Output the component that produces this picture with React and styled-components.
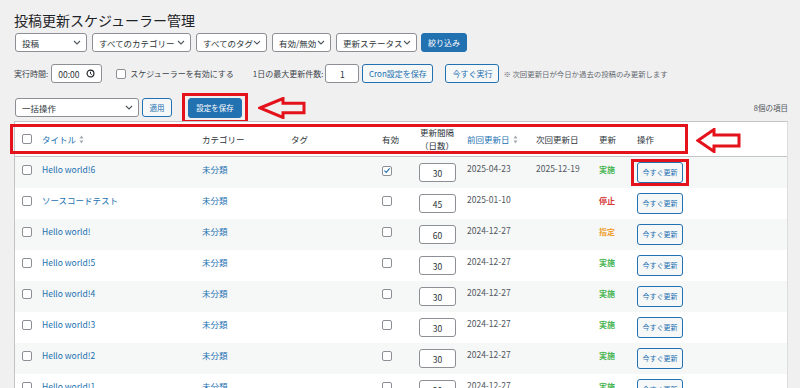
import React from "react";
import styled, { createGlobalStyle } from "styled-components";

const GlobalStyle = createGlobalStyle`
  body {
    margin: 0;
    background: #f0f0f1;
    font-family: "Noto Sans CJK JP", "Noto Sans", sans-serif;
    color: #3c434a;
  }
`;

const Page = styled.div`
  padding: 9px 12px 0 14px;
`;

const Title = styled.h1`
  margin: 0;
  font-size: 14px;
  font-weight: 400;
  line-height: 22px;
  color: #1d2327;
`;

const Row = styled.div`
  display: flex;
  align-items: center;
  gap: ${p => p.gap ?? 5}px;
  margin-top: ${p => p.mt || 0}px;
  height: 19px;
`;

const SelectBox = styled.div`
  display: flex;
  align-items: center;
  justify-content: space-between;
  box-sizing: border-box;
  width: ${p => p.w}px;
  height: 19px;
  padding: 0 5px 0 6px;
  background: #fff;
  border: 1px solid #8c8f94;
  border-radius: 3px;
  font-size: 8.5px;
  color: #2c3338;
  white-space: nowrap;
`;

const Button = styled.div`
  position: relative;
  display: flex;
  align-items: center;
  justify-content: center;
  box-sizing: border-box;
  width: ${p => p.w}px;
  height: ${p => p.h || 19}px;
  border-radius: 3px;
  font-size: ${p => p.fs || 8}px;
  white-space: nowrap;
  border: 1px solid #2271b1;
  background: ${p => (p.primary ? "#2271b1" : "#f6f7f7")};
  color: ${p => (p.primary ? "#fff" : "#2271b1")};
  ${p =>
    p.mark &&
    `&::after {
      content: "";
      position: absolute;
      inset: ${p.mark};
      border: 3px solid #e3121b;
    }`}
`;

const Label = styled.span`
  font-size: ${p => p.fs || 8}px;
  color: ${p => p.c || "#3c434a"};
  white-space: nowrap;
  margin-left: ${p => p.ml || 0}px;
`;

const TextInput = styled.div`
  display: flex;
  align-items: center;
  justify-content: ${p => (p.center ? "center" : "space-between")};
  box-sizing: border-box;
  width: ${p => p.w}px;
  height: 19px;
  padding: 0 6px;
  background: #fff;
  border: 1px solid #8c8f94;
  border-radius: 3px;
  font-size: 8.5px;
  color: #2c3338;
`;

const Check = styled.span`
  display: inline-flex;
  align-items: center;
  justify-content: center;
  box-sizing: border-box;
  width: 10px;
  height: 10px;
  border: 1px solid #8c8f94;
  border-radius: 2px;
  background: #fff;
  flex: none;
`;

const Spacer = styled.div`
  flex: 1;
`;

const TableWrap = styled.div`
  position: relative;
  margin-top: 4px;
  background: #fff;
  border: 1px solid #c3c4c7;
  border-right-color: #dcdcde;
`;

const cols = "27px 160px 89px 91px 37px 48px 69px 63px 38px 1fr";

const HeadRow = styled.div`
  display: grid;
  grid-template-columns: ${cols};
  align-items: center;
  height: 34px;
  border-bottom: 1px solid #c3c4c7;
  font-size: 8.5px;
  color: #2c3338;
`;

const HeadCell = styled.div`
  display: flex;
  align-items: center;
  gap: 3px;
  padding-left: ${p => p.pl || 0}px;
  color: ${p => (p.link ? "#2271b1" : "#2c3338")};
  ${p => p.stack && `flex-direction: column; gap: 0; line-height: 13px; align-items: center; padding-right: 12px;`}
`;

const BodyRow = styled.div`
  display: grid;
  grid-template-columns: ${cols};
  align-items: start;
  height: 31px;
  background: ${p => (p.odd ? "#f6f7f7" : "#fff")};
  font-size: 8.5px;
`;

const Cell = styled.div`
  padding-top: ${p => p.pt ?? 6}px;
  padding-left: ${p => p.pl || 0}px;
  line-height: 13px;
  color: ${p => p.c || "#50575e"};
  white-space: nowrap;
  font-weight: ${p => (p.bold ? 700 : 400)};
  font-size: ${p => p.fs || 8.5}px;
`;

const NumBox = styled.div`
  display: flex;
  align-items: center;
  justify-content: center;
  box-sizing: border-box;
  width: 37px;
  height: 19px;
  margin-top: 6px;
  background: #fff;
  border: 1px solid #8c8f94;
  border-radius: 3px;
  font-size: 8.5px;
  color: #2c3338;
`;

const HighlightBox = styled.div`
  position: absolute;
  left: -5px;
  top: 2px;
  width: 672px;
  height: 24px;
  border: 3px solid #e3121b;
  pointer-events: none;
`;

const Arrow2 = styled.div`
  position: absolute;
  left: 681px;
  top: 6px;
`;

const ArrowSlot = styled.div`
  display: flex;
  margin-left: 16px;
`;

const Chevron = () => (
  <svg width="8" height="5" viewBox="0 0 8 5">
    <path d="M1 1l3 3 3-3" fill="none" stroke="#50575e" strokeWidth="1.1" />
  </svg>
);

const Sort = () => (
  <svg width="5" height="9" viewBox="0 0 5 9">
    <path d="M2.5 0.5L4.5 3.5H0.5z" fill="#a7aaad" />
    <path d="M2.5 8.5L4.5 5.5H0.5z" fill="#a7aaad" />
  </svg>
);

const Clock = () => (
  <svg width="9" height="9" viewBox="0 0 10 10">
    <circle cx="5" cy="5" r="3.8" fill="none" stroke="#1d2327" strokeWidth="1.3" />
    <path d="M5 3v2.2l1.4 1" fill="none" stroke="#1d2327" strokeWidth="1.1" />
  </svg>
);

const Tick = () => (
  <svg width="9" height="9" viewBox="0 0 10 10">
    <path d="M1.8 5.2l2.2 2.2 4.4-5" fill="none" stroke="#2271b1" strokeWidth="1.4" />
  </svg>
);

const OutlineArrow = ({ w, h, head }) => {
  const m = h / 2;
  const s = h * 0.22;
  return (
    <svg width={w} height={h} viewBox={`0 0 ${w} ${h}`}>
      <polygon
        points={`2,${m} ${head},1.5 ${head},${s + 1.5} ${w - 2},${s + 1.5} ${w - 2},${h - s - 1.5} ${head},${h - s - 1.5} ${head},${h - 1.5}`}
        fill="none"
        stroke="#e3121b"
        strokeWidth="3"
      />
    </svg>
  );
};

const statusColor = { 実施: "#46b450", 停止: "#d63638", 指定: "#f0a030" };

const posts = [
  { title: "Hello world!6", on: true, days: 30, last: "2025-04-23", next: "2025-12-19", st: "実施" },
  { title: "ソースコードテスト", days: 45, last: "2025-01-10", next: "", st: "停止" },
  { title: "Hello world!", days: 60, last: "2024-12-27", next: "", st: "指定" },
  { title: "Hello world!5", days: 30, last: "2024-12-27", next: "", st: "実施" },
  { title: "Hello world!4", days: 30, last: "2024-12-27", next: "", st: "実施" },
  { title: "Hello world!3", days: 30, last: "2024-12-27", next: "", st: "実施" },
  { title: "Hello world!2", days: 30, last: "2024-12-27", next: "", st: "実施" },
  { title: "Hello world!1", days: 30, last: "2024-12-27", next: "", st: "実施" },
];

const filters = [
  ["投稿", 72],
  ["すべてのカテゴリー", 99],
  ["すべてのタグ", 71],
  ["有効/無効", 59],
  ["更新ステータス", 81],
];

export default function App() {
  return (
    <Page>
      <GlobalStyle />
      <Title>投稿更新スケジューラー管理</Title>

      <Row mt={2} gap={5} style={{ paddingLeft: 1 }}>
        {filters.map(([t, w]) => (
          <SelectBox key={t} w={w}>
            {t}
            <Chevron />
          </SelectBox>
        ))}
        <Button primary w={46} style={{ marginLeft: -1 }}>絞り込み</Button>
      </Row>

      <Row mt={12} gap={0}>
        <Label>実行時間:</Label>
        <TextInput w={51} style={{ marginLeft: 3 }}>
          00:00
          <Clock />
        </TextInput>
        <Check style={{ marginLeft: 14 }} />
        <Label ml={4}>スケジューラーを有効にする</Label>
        <Label ml={19}>1日の最大更新件数:</Label>
        <TextInput w={34} center style={{ marginLeft: 2 }}>1</TextInput>
        <Button w={71} style={{ marginLeft: 3 }}>Cron設定を保存</Button>
        <Button w={54} style={{ marginLeft: 12 }}>今すぐ実行</Button>
        <Label fs={7.4} c="#646970" ml={4}>※ 次回更新日が今日か過去の投稿のみ更新します</Label>
      </Row>

      <Row mt={15} gap={0}>
        <SelectBox w={124} style={{ marginLeft: 1 }}>
          一括操作
          <Chevron />
        </SelectBox>
        <Button w={30} fs={7.5} style={{ marginLeft: 3 }}>適用</Button>
        <Button primary mark="-6px -7px" w={54} h={20} fs={7.5} style={{ marginLeft: 16 }}>設定を保存</Button>
        <ArrowSlot>
          <OutlineArrow w={48} h={22} head={25} />
        </ArrowSlot>
        <Spacer />
        <Label fs={7.5} c="#50575e">8個の項目</Label>
      </Row>

      <TableWrap>
        <HeadRow>
          <HeadCell pl={7}><Check /></HeadCell>
          <HeadCell link>タイトル <Sort /></HeadCell>
          <HeadCell>カテゴリー</HeadCell>
          <HeadCell>タグ</HeadCell>
          <HeadCell>有効</HeadCell>
          <HeadCell stack>
            <span>更新間隔</span>
            <span>（日数）</span>
          </HeadCell>
          <HeadCell link>前回更新日 <Sort /></HeadCell>
          <HeadCell>次回更新日</HeadCell>
          <HeadCell>更新</HeadCell>
          <HeadCell>操作</HeadCell>
        </HeadRow>

        {posts.map((p, i) => (
          <BodyRow key={p.title} odd={i % 2 === 0}>
            <Cell pt={8} pl={7}><Check /></Cell>
            <Cell c="#2271b1">{p.title}</Cell>
            <Cell c="#2271b1">未分類</Cell>
            <Cell />
            <Cell pt={8}>
              <Check>{p.on && <Tick />}</Check>
            </Cell>
            <NumBox>{p.days}</NumBox>
            <Cell pt={5}>{p.last}</Cell>
            <Cell pt={5}>{p.next}</Cell>
            <Cell bold fs={8} c={statusColor[p.st]}>{p.st}</Cell>
            <Cell pt={5}>
              <Button w={46} h={21} fs={7} mark={i === 0 ? "-4px -7px" : undefined}>今すぐ更新</Button>
            </Cell>
          </BodyRow>
        ))}

        <HighlightBox />
        <Arrow2>
          <OutlineArrow w={45} h={25} head={18} />
        </Arrow2>
      </TableWrap>
    </Page>
  );
}
